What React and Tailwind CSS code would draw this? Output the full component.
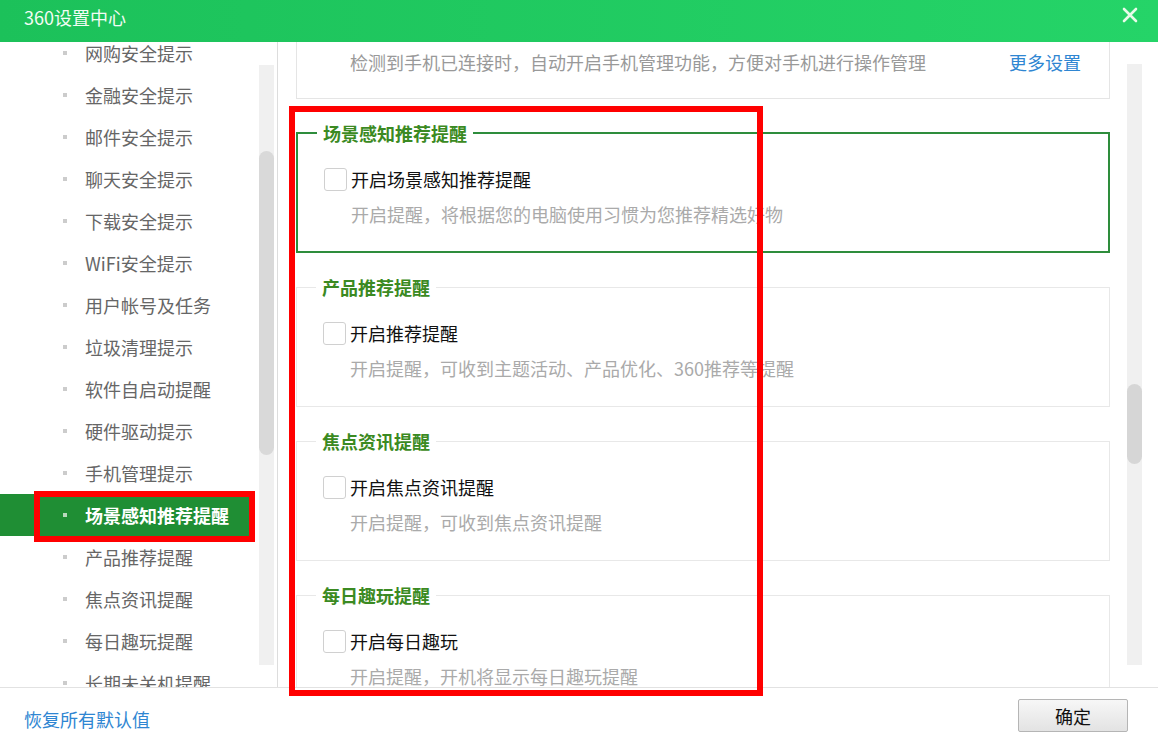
import React from "react";

const menu = [
  "网购安全提示",
  "金融安全提示",
  "邮件安全提示",
  "聊天安全提示",
  "下载安全提示",
  "WiFi安全提示",
  "用户帐号及任务",
  "垃圾清理提示",
  "软件自启动提醒",
  "硬件驱动提示",
  "手机管理提示",
  "场景感知推荐提醒",
  "产品推荐提醒",
  "焦点资讯提醒",
  "每日趣玩提醒",
  "长期未关机提醒",
];

const groups = [
  {
    title: "场景感知推荐提醒",
    label: "开启场景感知推荐提醒",
    desc: "开启提醒，将根据您的电脑使用习惯为您推荐精选好物",
    active: true,
  },
  {
    title: "产品推荐提醒",
    label: "开启推荐提醒",
    desc: "开启提醒，可收到主题活动、产品优化、360推荐等提醒",
  },
  {
    title: "焦点资讯提醒",
    label: "开启焦点资讯提醒",
    desc: "开启提醒，可收到焦点资讯提醒",
  },
  {
    title: "每日趣玩提醒",
    label: "开启每日趣玩",
    desc: "开启提醒，开机将显示每日趣玩提醒",
  },
];

const Group = ({ title, label, desc, active }) => (
  <fieldset
    className={
      active
        ? "mt-[22px] pb-[25px] border-2 border-solid border-[#2e8d3c]"
        : "mt-[22px] pb-[26px] border border-solid border-[#e8e8e8]"
    }
  >
    <legend className="ml-[19px] px-[6px] text-[18px] leading-[24px] font-bold text-[#3b8a22]">
      {title}
    </legend>
    <div className="pl-[26px]">
      <div className="mt-[22px] flex items-center h-[24px]">
        <span className="w-[23px] h-[23px] border border-[#d0d0d0] rounded-[3px] bg-white" />
        <span className="ml-[4px] text-[18px] leading-[24px] text-[#111]">{label}</span>
      </div>
      <div className="mt-[11px] pl-[27px] text-[18px] leading-[24px] text-[#aaaaaa]">{desc}</div>
    </div>
  </fieldset>
);

const App = () => {
  return (
    <div
      className="relative w-[1158px] h-[745px] bg-white flex flex-col overflow-hidden"
      style={{ fontFamily: '"Noto Sans CJK SC", "Noto Sans", sans-serif' }}
    >
      {/* title bar */}
      <div className="h-[42px] shrink-0 flex items-start justify-between bg-gradient-to-r from-[#1cc15a] to-[#25d468]">
        <span className="ml-[24px] mt-[5px] text-[18px] leading-[24px] text-[#f2fcf4]">360设置中心</span>
        <svg className="mr-[20px] mt-[7px]" width="16" height="16" viewBox="0 0 16 16">
          <path d="M2 2L14 14M14 2L2 14" stroke="#e8fbe9" strokeWidth="2.6" strokeLinecap="round" />
        </svg>
      </div>

      <div className="flex flex-1 min-h-0">
        {/* sidebar */}
        <div className="w-[278px] shrink-0 flex border-r border-[#dddddd]">
          <div className="w-[250px] overflow-hidden">
            <div className="-mt-[10px]">
              {menu.map((item, i) => {
                const sel = i === 11;
                return (
                  <div
                    key={item}
                    className={`h-[42px] flex items-center pl-[63px] ${sel ? "bg-[#1f8e34]" : ""}`}
                  >
                    <span className={`w-[4px] h-[4px] mr-[18px] ${sel ? "bg-[#b9d9bc]" : "bg-[#cccccc]"}`} />
                    <span
                      className={`text-[18px] leading-[24px] ${
                        sel ? "text-white font-bold" : "text-[#666666]"
                      }`}
                    >
                      {item}
                    </span>
                  </div>
                );
              })}
            </div>
          </div>
          <div className="ml-[9px] mr-[3px] w-[15px] mt-[23px] mb-[22px] bg-[#f0f0f0]">
            <div className="mt-[86px] h-[304px] rounded-full bg-[#d9d9d9]" />
          </div>
        </div>

        {/* content */}
        <div className="flex-1 flex min-w-0">
          <div className="flex-1 pl-[18px] pr-[17px] overflow-hidden">
            <div className="-mt-[21px] h-[78px] border border-[#e5e5e5] flex items-end justify-between pl-[53px] pr-[28px] pb-[24px]">
              <span className="text-[18px] leading-[24px] text-[#999999]">
                检测到手机已连接时，自动开启手机管理功能，方便对手机进行操作管理
              </span>
              <span className="text-[18px] leading-[24px] text-[#2f86d2]">更多设置</span>
            </div>
            {groups.map((g) => (
              <Group key={g.title} {...g} />
            ))}
          </div>
          <div className="w-[15px] mr-[16px] mt-[22px] mb-[22px] bg-[#f0f0f0]">
            <div className="mt-[320px] h-[80px] rounded-full bg-[#d6d6d6]" />
          </div>
        </div>
      </div>

      {/* footer */}
      <div className="h-[58px] shrink-0 border-t border-[#e2e2e2] flex items-start justify-between">
        <span className="ml-[24px] mt-[19px] text-[18px] leading-[24px] text-[#2f86d2]">恢复所有默认值</span>
        <button className="mr-[30px] mt-[11px] w-[110px] h-[33px] border border-[#b5b5b5] rounded-[2px] bg-gradient-to-b from-[#f7f7f7] to-[#e3e3e3] text-[18px] leading-[24px] text-[#111]">
          确定
        </button>
      </div>

      {/* annotation boxes */}
      <div className="absolute left-[34px] top-[491px] w-[221px] h-[51px] border-[6px] border-[#ff0000]" />
      <div className="absolute left-[289px] top-[106px] w-[474px] h-[590px] border-[6px] border-[#ff0000]" />
    </div>
  );
};

export default App;
